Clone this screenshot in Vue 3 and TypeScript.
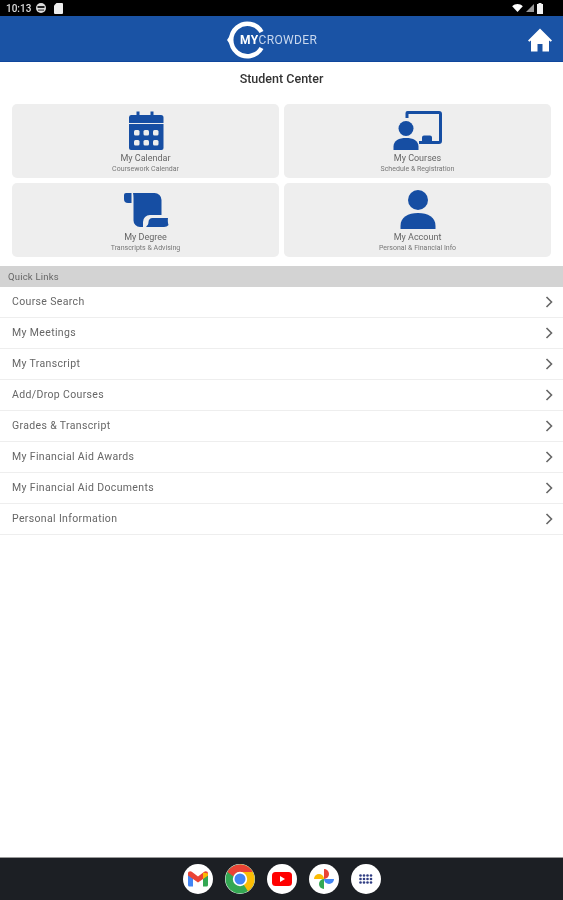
<template>
  <div class="screen">
    <div class="status-bar">
      <div class="status-left">
        <span class="clock">10:13</span>
        <svg class="status-icon" width="12" height="12" viewBox="0 0 12 12">
          <circle cx="6" cy="6" r="5" fill="#ddd" />
          <rect x="2.500" y="4" width="7" height="2" fill="#222" />
          <path d="M3 7.500h6v1.200H3z" fill="#444" />
        </svg>
        <svg class="status-icon card" width="9" height="11" viewBox="0 0 9 11">
          <path d="M2.500 0H8a1 1 0 0 1 1 1v9a1 1 0 0 1-1 1H1a1 1 0 0 1-1-1V2.500z" fill="#eee" />
        </svg>
      </div>
      <div class="status-right">
        <svg width="11" height="8" viewBox="0 0 12 9"><path d="M0 2.500C3.500-.8 8.500-.8 12 2.500L6 9z" fill="#fff" /></svg>
        <svg width="8" height="8" viewBox="0 0 9 9"><path d="M9 0v9H0z" fill="#999" /></svg>
        <svg width="6" height="11" viewBox="0 0 6 11"><path d="M1.500 1V0h3v1H6v10H0V1z" fill="#f2f2f2" /></svg>
      </div>
    </div>

    <header class="app-header">
      <div class="logo">
        <svg class="logo-ring" width="40" height="38" viewBox="0 0 40 38">
          <path d="M34.500 11A16.200 16.200 0 1 0 34.500 27" fill="none" stroke="#fff" stroke-width="4.500" />
          <path d="M0 19l4-6v12z" fill="#fff" />
        </svg>
        <span class="logo-text"><b>MY</b>CROWDER</span>
      </div>
      <svg class="home" width="24" height="24" viewBox="0 0 24 24">
        <path d="M12 .5 0 12.500l1.300 1.300L3 12.500V23.500h6.500V16h5v7.500H21V12.500l1.700 1.300L24 12.500z" fill="#fff" />
      </svg>
    </header>

    <h1 class="page-title">Student Center</h1>

    <section class="tiles">
      <div v-for="tile in tiles" :key="tile.title" class="tile">
        <svg class="tile-icon" width="52" height="42" viewBox="0 0 52 42">
          <g v-if="tile.icon === 'calendar'" fill="#164ea3">
            <path d="M11 5h5.500V1.500h3V5h11V1.500h3V5H41a2.500 2.500 0 0 1 2.500 2.500V13H9V7.500A2.500 2.500 0 0 1 11 5z" />
            <path d="M9 14h34.500v24a2 2 0 0 1-2 2H11a2 2 0 0 1-2-2z" />
            <g fill="#eee">
              <rect v-for="cell in calendarCells" :key="cell.x + '-' + cell.y" :x="cell.x" :y="cell.y" width="5.500" height="5.500" rx="1.500" />
            </g>
          </g>
          <g v-else-if="tile.icon === 'courses'" fill="#164ea3">
            <path d="M13.500 8V3A2 2 0 0 1 15.500 1H47a3 3 0 0 1 3 3v27a3 3 0 0 1-3 3H27v-3h3v-3.500a2 2 0 0 1 2-2h6a2 2 0 0 1 2 2V31h7V4H16.500v4z" />
            <circle cx="14" cy="18.500" r="7.500" />
            <path d="M1.500 40v-3.500c0-6 5.500-8.500 12.500-8.500s12.500 2.500 12.500 8.500V40z" />
          </g>
          <g v-else-if="tile.icon === 'degree'" fill="#164ea3">
            <path d="M6 4h5.500v10H8a4 4 0 0 1-4-4V6a2 2 0 0 1 2-2z" />
            <path d="M13 4h21.500a7 7 0 0 1 7 7v15H30a7 7 0 0 0-7 7v5h-3a6.500 6.500 0 0 1-6.500-6.500V9c0-2-.2-3.500-.5-5z" />
            <path d="M26 38c1.500-1.500 2.500-3 2.500-5 0-2 1.500-4 4-4H48c-.5 2.500 0 6 .5 7-1 1-2.500 2-4.500 2z" />
          </g>
          <g v-else fill="#164ea3">
            <circle cx="26" cy="11" r="10" />
            <path d="M8.500 40v-3c0-9 7.500-13 17.500-13s17.500 4 17.500 13v3z" />
          </g>
        </svg>
        <div class="tile-title">{{ tile.title }}</div>
        <div class="tile-sub">{{ tile.sub }}</div>
      </div>
    </section>

    <div class="quick-head">Quick Links</div>
    <ul class="links">
      <li v-for="link in links" :key="link">
        <span>{{ link }}</span>
        <svg width="8" height="12" viewBox="0 0 8 12"><path d="M1.500 1l5 5-5 5" fill="none" stroke="#666" stroke-width="1.600" /></svg>
      </li>
    </ul>

    <nav class="dock">
      <div class="dock-btn">
        <svg width="20" height="16" viewBox="0 0 20 16">
          <path d="M0 3v11a1.500 1.500 0 0 0 1.500 1.500H5V7z" fill="#4285f4" />
          <path d="M15 7v8.500h3.500A1.500 1.500 0 0 0 20 14V3z" fill="#34a853" />
          <path d="M0 4.500V2.500C0 .5 2.200-.5 3.800.8L10 5.500l6.200-4.700C17.800-.5 20 .5 20 2.500v2L15 8 10 11.500 5 8z" fill="#ea4335" />
          <path d="M15 1.500l5 1V4.500L15 8z" fill="#fbbc04" />
        </svg>
      </div>
      <div class="dock-btn">
        <svg width="30" height="30" viewBox="0 0 30 30">
          <circle cx="15" cy="15" r="14.500" fill="#34a853" />
          <path d="M15 .5A14.500 14.500 0 0 1 29.500 15c0 5-2.500 9.500-6.500 12.200L15 15z" fill="#fbbc04" />
          <path d="M2.400 8C5 3.500 9.700.5 15 .5c5.500 0 10.300 3 12.700 7.500H15a7 7 0 0 0-6.500 4.500z" fill="#ea4335" />
          <circle cx="15" cy="15" r="7.200" fill="#fff" />
          <circle cx="15" cy="15" r="5.500" fill="#4285f4" />
        </svg>
      </div>
      <div class="dock-btn">
        <svg width="20" height="14" viewBox="0 0 20 14">
          <rect width="20" height="14" rx="3.500" fill="#f00" />
          <path d="M8 4v6l5-3z" fill="#fff" />
        </svg>
      </div>
      <div class="dock-btn">
        <svg width="22" height="22" viewBox="0 0 22 22">
          <path d="M11 11H1a5 5 0 0 1 10 0z" fill="#fbbc04" />
          <path d="M11 11V1a5 5 0 0 1 0 10z" fill="#ea4335" />
          <path d="M11 11h10a5 5 0 0 1-10 0z" fill="#4285f4" />
          <path d="M11 11v10a5 5 0 0 1 0-10z" fill="#34a853" />
        </svg>
      </div>
      <div class="dock-btn">
        <svg width="14" height="10" viewBox="0 0 14 10">
          <g fill="#2f3c82">
            <circle v-for="dot in dots" :key="dot.x + '-' + dot.y" :cx="dot.x" :cy="dot.y" r="1.300" />
          </g>
        </svg>
      </div>
    </nav>
  </div>
</template>

<script setup lang="ts">
interface Tile {
  title: string
  sub: string
  icon: 'calendar' | 'courses' | 'degree' | 'account'
}

const tiles: Tile[] = [
  { title: 'My Calendar', sub: 'Coursework Calendar', icon: 'calendar' },
  { title: 'My Courses', sub: 'Schedule & Registration', icon: 'courses' },
  { title: 'My Degree', sub: 'Transcripts & Advising', icon: 'degree' },
  { title: 'My Account', sub: 'Personal & Financial Info', icon: 'account' },
]

const links = [
  'Course Search',
  'My Meetings',
  'My Transcript',
  'Add/Drop Courses',
  'Grades & Transcript',
  'My Financial Aid Awards',
  'My Financial Aid Documents',
  'Personal Information',
]

const calendarCells = [14, 23.5, 33].flatMap((x) => [20, 30].map((y) => ({ x, y })))
const dots = [1.5, 5, 8.5, 12].flatMap((x) => [1.5, 5, 8.5].map((y) => ({ x, y })))
</script>

<style>
html,
body {
  margin: 0;
  background: #fff;
}
</style>

<style scoped>
.screen {
  display: flex;
  flex-direction: column;
  height: 900px;
  overflow: hidden;
  background: #fff;
  font-family: Roboto, "Liberation Sans", sans-serif;
  filter: blur(0.4px);
}

.status-bar {
  display: flex;
  align-items: center;
  justify-content: space-between;
  height: 16px;
  padding: 0 20px 0 6px;
  background: #000;
  color: #ddd;
}

.status-left,
.status-right {
  display: flex;
  align-items: center;
}

.status-right {
  gap: 3px;
}

.clock {
  font-size: 10px;
  font-weight: 500;
  margin-right: 4px;
}

.card {
  margin-left: 7px;
}

.app-header {
  position: relative;
  display: flex;
  align-items: center;
  justify-content: center;
  height: 46px;
  box-sizing: border-box;
  background: #1a53a5;
  border-bottom: 1px solid #0f469c;
}

.logo {
  position: relative;
  display: flex;
  align-items: center;
  height: 38px;
  width: 92px;
  padding-left: 13px;
  box-sizing: border-box;
  margin-right: 17px;
}

.logo-ring {
  position: absolute;
  left: 0;
  top: 1px;
}

.logo-text {
  position: relative;
  top: 1px;
  font-size: 12px;
  letter-spacing: 0.35px;
  color: #c9d8ee;
  white-space: nowrap;
}

.logo-text b {
  color: #fff;
  font-weight: 700;
}

.home {
  position: absolute;
  right: 11px;
  top: 12px;
}

.page-title {
  margin: 0;
  padding-top: 9px;
  height: 33px;
  box-sizing: border-box;
  line-height: 16px;
  text-align: center;
  font-size: 12.500px;
  font-weight: 500;
  color: #333;
}

.tiles {
  display: grid;
  grid-template-columns: 267px 267px;
  grid-auto-rows: 74px;
  gap: 5px;
  padding: 9px 12px;
}

.tile {
  display: flex;
  flex-direction: column;
  align-items: center;
  padding-top: 6px;
  box-sizing: border-box;
  background: #eee;
  border-radius: 5px;
}

.tile-icon {
  flex: none;
}

.tile-title {
  font-size: 9px;
  line-height: 12px;
  color: #666;
}

.tile-sub {
  margin-top: 1px;
  font-size: 7px;
  line-height: 9px;
  color: #777;
}

.quick-head {
  height: 21px;
  line-height: 21px;
  padding-left: 8px;
  background: #d3d3d3;
  font-size: 9.500px;
  letter-spacing: 0.2px;
  color: #666;
}

.links {
  margin: 0;
  padding: 0;
  list-style: none;
}

.links li {
  display: flex;
  align-items: center;
  justify-content: space-between;
  height: 31px;
  box-sizing: border-box;
  padding: 0 10px 1px 12px;
  border-bottom: 1px solid #eee;
  font-size: 10.500px;
  letter-spacing: 0.35px;
  color: #666;
}

.dock {
  display: flex;
  align-items: center;
  justify-content: center;
  gap: 12px;
  height: 42px;
  margin-top: auto;
  background: #1c1f24;
  border-top: 1px solid #9a9a9a;
}

.dock-btn {
  display: flex;
  align-items: center;
  justify-content: center;
  width: 30px;
  height: 30px;
  border-radius: 50%;
  background: #fff;
}
</style>
